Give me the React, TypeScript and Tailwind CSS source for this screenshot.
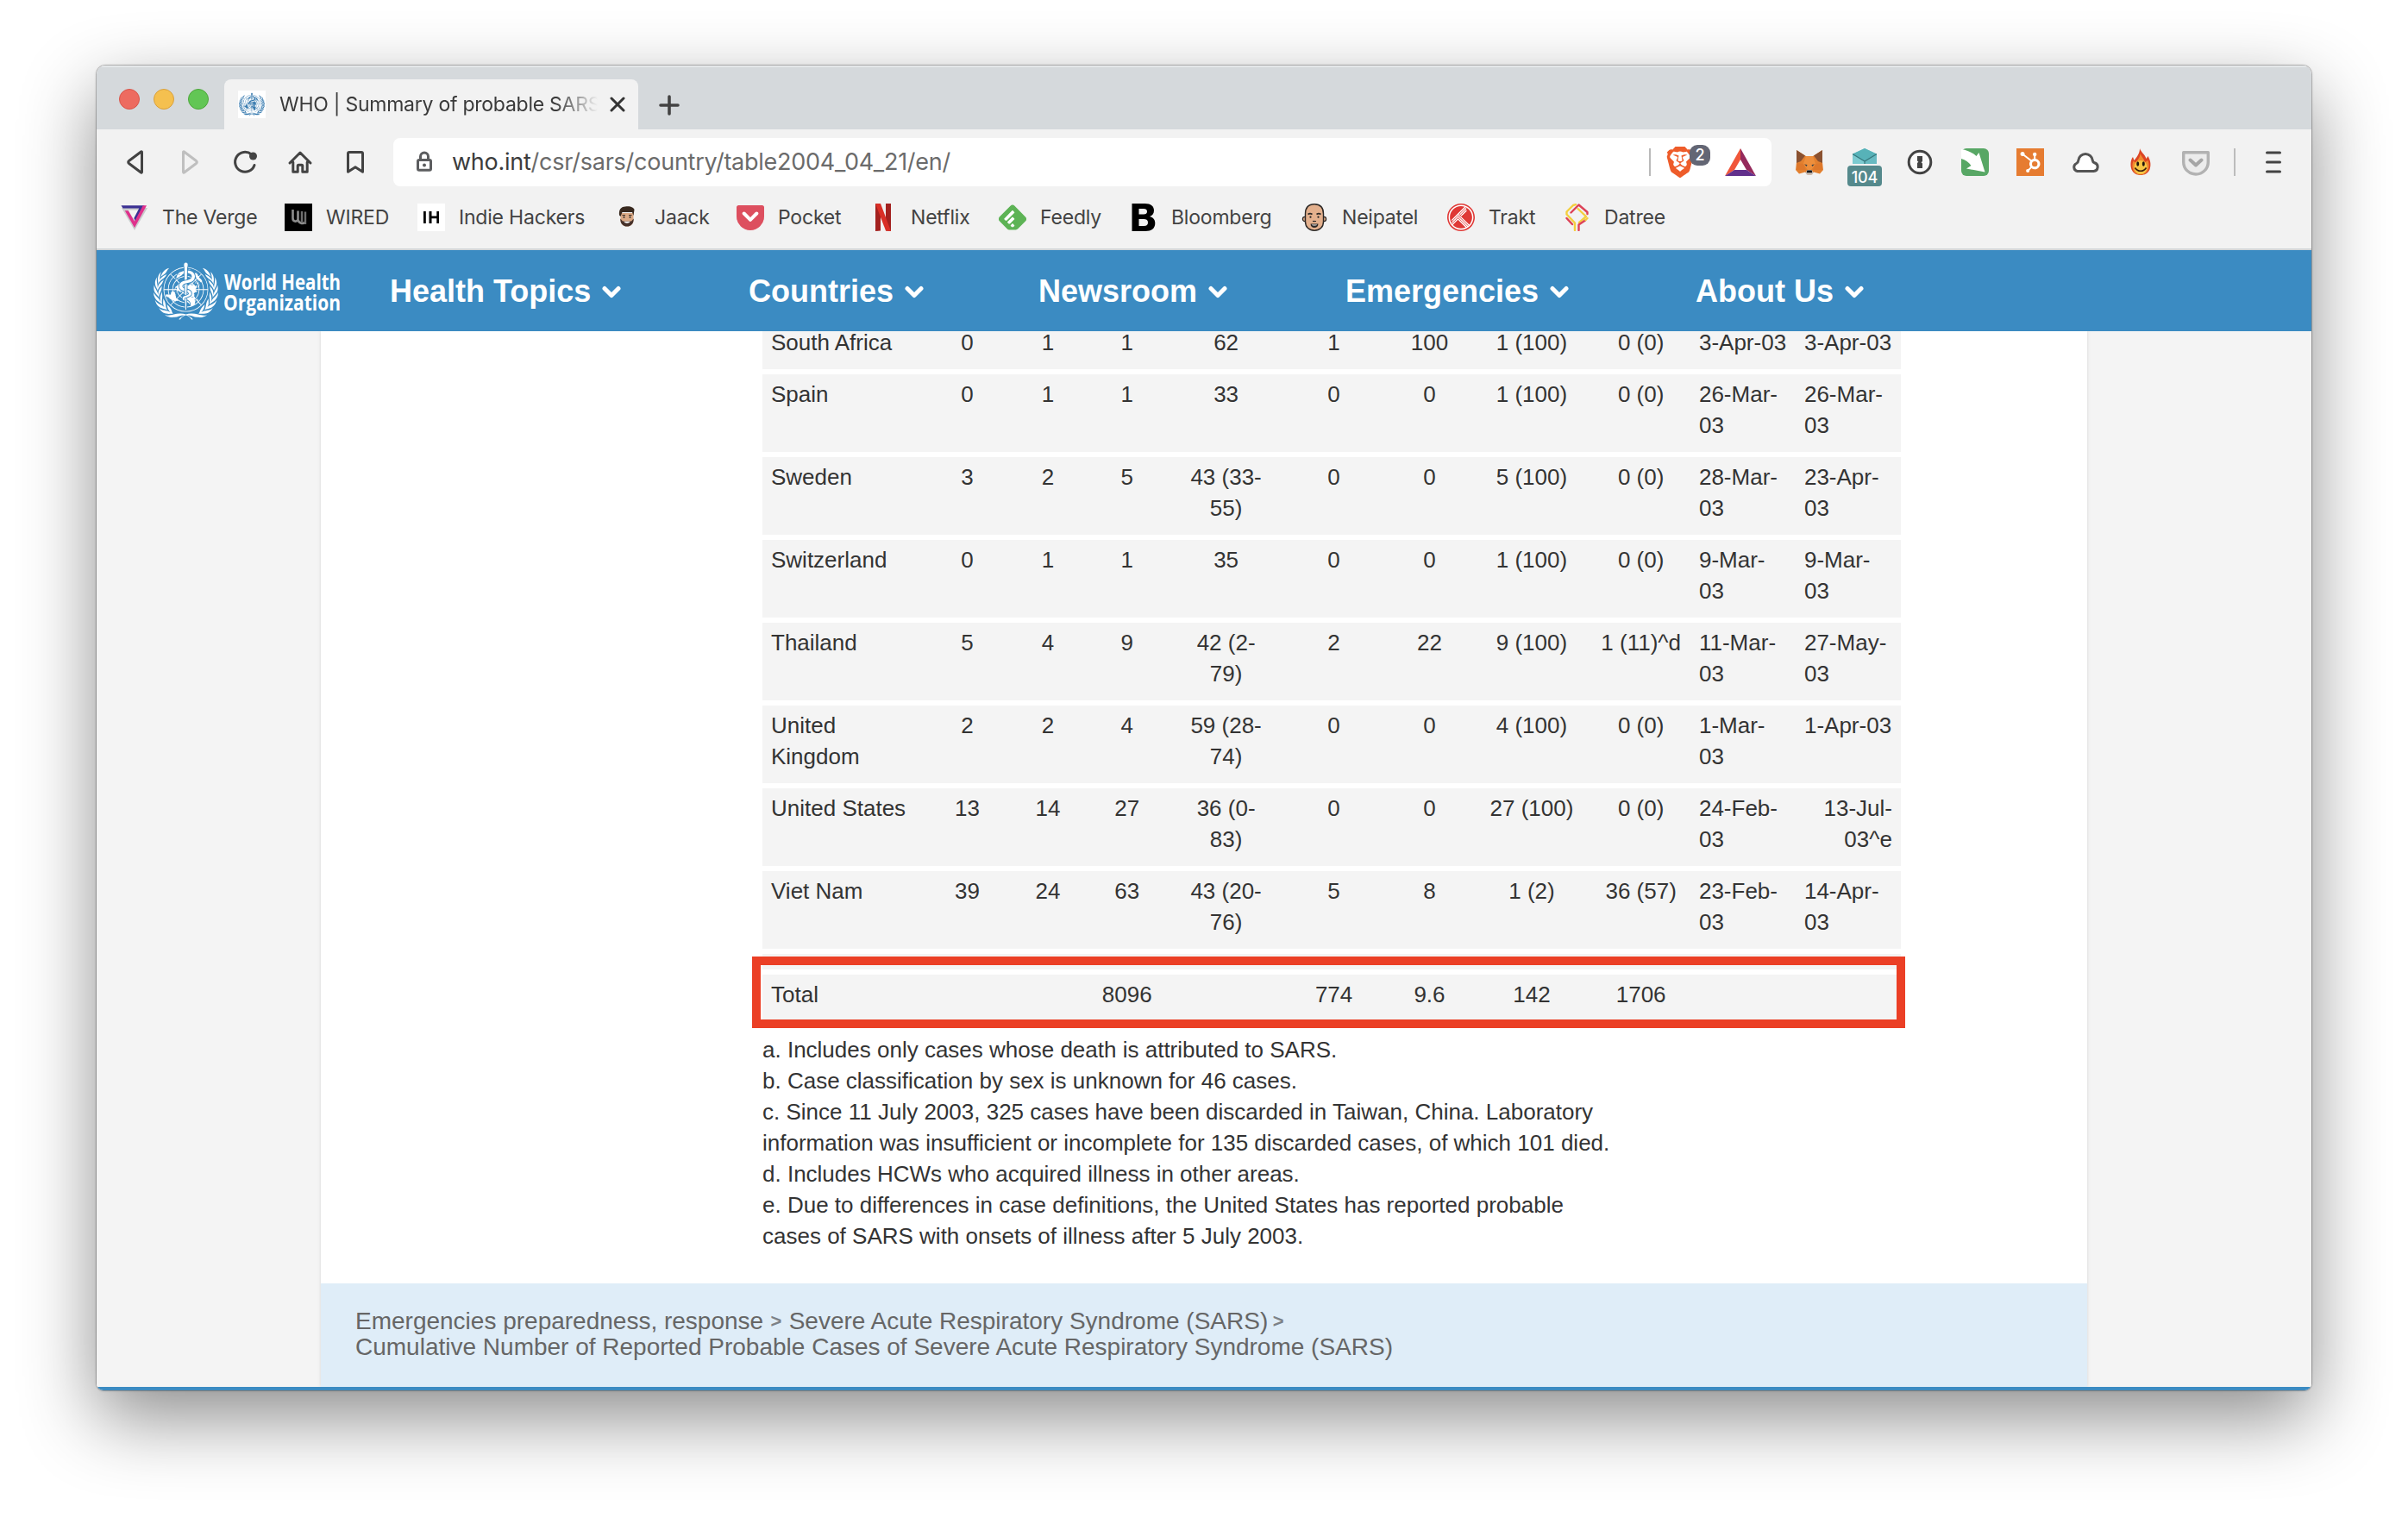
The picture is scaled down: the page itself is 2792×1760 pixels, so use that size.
import type { ReactNode } from "react";
import {
  SiBrave,
  SiFeedly,
  SiHubspot,
  SiTrakt,
  SiWorldhealthorganization,
} from "react-icons/si";

/* ---------- toolbar icons ---------- */

const stroke = {
  fill: "none",
  stroke: "#434343",
  strokeWidth: 3,
  strokeLinecap: "round",
  strokeLinejoin: "round",
} as const;

const BackIcon = () => (
  <svg viewBox="0 0 32 32" className="size-8" {...stroke}>
    <path d="M24.5 4.5v23a.6.6 0 0 1-1 .5L9.500 17.500a1.800 1.800 0 0 1 0-3L23.500 4a.6.6 0 0 1 1 .5z" />
  </svg>
);
const ForwardIcon = () => (
  <svg viewBox="0 0 32 32" className="size-8" {...stroke} stroke="#bfbfbf">
    <path d="M8.500 4.500v23a.6.6 0 0 0 1 .5l14-10.500a1.800 1.800 0 0 0 0-3L9.500 4a.6.6 0 0 0-1 .5z" />
  </svg>
);
const ReloadIcon = () => (
  <svg viewBox="0 0 32 32" className="size-8" {...stroke}>
    <path d="M23.500 7A11.500 11.500 0 1 0 27 19.500" />
    <circle cx="25.500" cy="9" r="4.500" fill="#434343" stroke="none" />
  </svg>
);
const HomeIcon = () => (
  <svg viewBox="0 0 32 32" className="size-8" {...stroke}>
    <path d="M4 17 16 5l12 12M7.800 16v11.300h5.400v-7.100a1 1 0 0 1 1-1h3.600a1 1 0 0 1 1 1v7.100h5.400V16" />
  </svg>
);
const BookmarkIcon = () => (
  <svg viewBox="0 0 32 32" className="size-8" {...stroke}>
    <path d="M7.500 6a1.500 1.500 0 0 1 1.500-1.500h14A1.500 1.500 0 0 1 24.500 6v21.200L16 21.800l-8.500 5.400z" />
  </svg>
);
const LockIcon = () => (
  <svg viewBox="0 0 20 26" className="h-[26px] w-5" fill="none" stroke="#5c5d5f" strokeWidth="3">
    <rect x="2.500" y="10.500" width="15" height="11.800" rx="1.500" />
    <path d="M5.500 10V6.500a4.500 4.500 0 0 1 9 0V10" />
    <circle cx="10" cy="16.400" r="2" fill="#5c5d5f" stroke="none" />
  </svg>
);
const Chevron = () => (
  <svg viewBox="0 0 22 15" className="mt-[1px] ml-[13px] h-[15px] w-[22px]" {...stroke} stroke="#fff" strokeWidth="5">
    <path d="m3 3.500 8 8 8-8" />
  </svg>
);

/* ---------- extension icons ---------- */

const BatIcon = () => (
  <svg viewBox="0 0 36 32" className="h-8 w-9">
    <path d="M18 0 0 32l11-7 7-12z" fill="#f0563a" />
    <path d="M18 0v13l7 12 11 7z" fill="#952a5c" />
    <path d="M0 32h36l-11-7H11z" fill="#62308c" />
  </svg>
);
const FoxIcon = () => (
  <svg viewBox="0 0 32 32" className="size-8">
    <path d="m1 2 11 7h8l11-7v14l1 9-4 4.500-7-2-3 3h-4l-3-3-7 2L0 25l1-9z" fill="#e3802f" />
    <path d="M1 2l10 6.500L6 15l-5 2zM31 2 21 8.500 26 15l5 2z" fill="#8a5130" />
    <path d="m12 9-3 9 5 7h4l5-7-3-9z" fill="#ee8f3c" />
    <path d="m1 17 8 1 3 7-11 0zM31 17l-8 1-3 7 11 0z" fill="#de782b" />
    <path d="m10 18.500 3.500.5-.7 2zM22 18.500l-3.500.5.700 2z" fill="#3a4146" />
    <path d="m11.500 28 2-3h5l2 3-1.500 2.800h-6z" fill="#c8bdb4" />
    <path d="M13.300 25.500h5.400l.5 2.800h-6.400z" fill="#17181a" />
  </svg>
);
const MailIcon = () => (
  <span className="relative flex h-8 w-8 justify-center">
    <svg viewBox="0 0 28 18" className="h-[18px] w-7">
      <path d="M0 6.500 14 0l14 6.500V18H0z" fill="#7ccad0" />
      <path d="M0 6.500 14 0l14 6.500L14 15z" fill="#57b2b8" />
      <path d="M28 6.500V18H14v-3z" fill="#68bac1" />
      <path d="m0 6.500 14 8.500 14-8.500M14 15v3" fill="none" stroke="#35777d" strokeWidth="1.200" />
    </svg>
    <span className="absolute top-5 left-[-4px] flex h-6 w-10 items-center justify-center rounded-[4px] bg-[#55898c] pt-[3px] text-[18px] leading-none font-medium tracking-[-0.2px] text-white">
      104
    </span>
  </span>
);
const OnePasswordIcon = () => (
  <svg viewBox="0 0 32 32" className="size-8">
    <circle cx="16" cy="16" r="12.800" fill="#fafafa" stroke="#434343" strokeWidth="3" />
    <path d="M13 9h6v6l-1.400 1.300L19 17.600V23h-6v-6l1.400-1.300L13 14.400z" fill="#434343" />
  </svg>
);
const ArrowIcon = () => (
  <svg viewBox="0 0 32 32" className="size-8">
    <rect width="32" height="32" rx="6" fill="#58a765" />
    <path d="M0 1c7 1 13 4 17.500 8L20.500 5l7 22.500L6 23.500l5.500-3.500C8.500 16 5 13.500 0 12z" fill="#fff" />
  </svg>
);
const HubspotIcon = () => (
  <span className="flex size-8 items-center justify-center bg-[#e67c31] text-white">
    <SiHubspot className="size-6" />
  </span>
);
const CloudIcon = () => (
  <svg viewBox="0 0 32 32" className="size-8" {...stroke} fill="#fff" stroke="#545454">
    <path d="M6.500 26.500h19a5 5 0 0 0 1-9.800c-1.500-.4-2-1-2.200-2.700a8.300 8.300 0 0 0-16.500 0c-.1 1.800-.6 2.600-2.300 3.500a4.800 4.800 0 0 0 1 9z" />
  </svg>
);
const FlameIcon = () => (
  <svg viewBox="0 0 32 32" className="size-8">
    <path d="M15 0c1 4 6 7 7.500 12l2-3c3.500 6 3.500 11 2 15.500C24.500 29 20.500 31 16 31S7.500 29 5.500 24.500C4 20 4 14 7 10l1.500 4c3-4 6.500-8 6.500-14z" fill="#dc4524" />
    <path d="M15.500 6c1 3 4.500 6 5.500 10l3.500-2c1.500 4 1.500 7.500.2 10.500C23 28.500 20 30.500 16 30.500s-7.500-2-8.700-5.500c-1.200-3-1.300-7 .2-10.500l2.500 2c2.500-3 5.500-6 5.500-10.500z" fill="#f08a30" />
    <ellipse cx="16" cy="22" rx="7.500" ry="8" fill="#f6c544" />
    <ellipse cx="12.700" cy="18" rx="1.500" ry="2.700" fill="#20140d" />
    <ellipse cx="19.300" cy="18" rx="1.500" ry="2.700" fill="#20140d" />
    <path d="M9.500 22.500c3 5 10 5 13 0" fill="none" stroke="#3a1c0c" strokeWidth="1.600" />
  </svg>
);
const GreyPocketIcon = () => (
  <svg viewBox="0 0 32 32" className="size-8">
    <path d="M1.700 4.700h28.600V16a14.300 14 0 0 1-28.600 0z" fill="#ececec" stroke="#b2b2b2" strokeWidth="3.400" strokeLinejoin="round" />
    <path d="m9.500 13.500 6.500 6 6.500-6" fill="none" stroke="#a6a6a6" strokeWidth="4" strokeLinecap="round" strokeLinejoin="round" />
  </svg>
);

/* ---------- bookmark icons ---------- */

const VergeIcon = () => (
  <svg viewBox="0 0 32 32" className="size-8">
    <path d="M1 5h30L16 31z" fill="#c9c9cb" />
    <path d="M8.500 7.500h14L16 20z" fill="#f2f2f2" />
    <path d="M.5 2.200h27L17 20.500l-1.700-3.600 6-11.400H2.500z" fill="#3b3193" />
    <path d="M25.800 2.200H30L16 28 4.800 8.200h4L16 20.800z" fill="#e0318c" />
  </svg>
);
const WiredIcon = () => (
  <svg viewBox="0 0 32 32" className="size-8">
    <rect width="32" height="32" fill="#000" />
    <path d="M9.500 7v10c0 4 4.500 5 6 1.500V8.500m0 10c.5 4 5 5.500 8.500 3.500" fill="none" stroke="#8d8d8d" strokeWidth="2.600" />
    <path d="M20 9v12.500M24 9.500V24" fill="none" stroke="#6f6f6f" strokeWidth="2.400" />
  </svg>
);
const IndieIcon = () => (
  <svg viewBox="0 0 32 32" className="size-8">
    <rect width="32" height="32" fill="#fff" />
    <path d="M7 9h2.800v14H7zM13.500 9h3v5.500h5.800V9H25v14h-2.700v-5.800h-5.800V23h-3z" fill="#000" />
  </svg>
);
const JaackIcon = () => (
  <svg viewBox="0 0 32 32" className="size-8">
    <path d="M8.500 11h15v8c0 5-3.500 7.500-7.500 7.500S8.500 24 8.500 19z" fill="#dba985" />
    <path d="M7 13.500C6.500 7 8.500 4 14 3.500c6-1 10 1.500 10.500 3.500l-1 7-1.500-4H10.500L8.500 15z" fill="#38291f" />
    <path d="M8.300 17.500 11 20.500h10l2.700-3c.3 5.500-3.200 9-7.700 9s-8-3.500-7.700-9z" fill="#46312a" />
    <path d="M12.500 20.800h7c-.5 2.600-6.500 2.600-7 0z" fill="#fff" />
    <path d="M10.500 13.500h3.500m4 0h3.500" stroke="#38291f" strokeWidth="1.200" />
    <circle cx="12.500" cy="15.700" r="1" fill="#222" />
    <circle cx="19.500" cy="15.700" r="1" fill="#222" />
  </svg>
);
const PocketIcon = () => (
  <svg viewBox="0 0 32 32" className="size-8">
    <path d="M2.500 2h27A2.500 2.500 0 0 1 32 4.500V15a16 16 0 0 1-32 0V4.500A2.500 2.500 0 0 1 2.500 2z" fill="#dd4f5f" />
    <path d="m8.700 11.500 7.300 7.300 7.300-7.300" fill="none" stroke="#fff" strokeWidth="4" strokeLinecap="round" strokeLinejoin="round" />
  </svg>
);
const NetflixIcon = () => (
  <svg viewBox="0 0 32 32" className="size-8">
    <path d="M7 0h6v31.500L7 32zM19 0h6v32l-6-.5z" fill="#a3211f" />
    <path d="M7 0h6l12 32-6-.5z" fill="#d92f27" />
  </svg>
);
const FeedlyIcon = () => <SiFeedly className="size-8 bg-[radial-gradient(circle,#fff_9px,transparent_10px)] text-[#5db355]" />;
const BloombergIcon = () => (
  <svg viewBox="0 0 32 32" className="size-8">
    <path
      fillRule="evenodd"
      d="M2.500 0h15C24.500 0 28 3 28 8c0 3.500-1.800 6-5 7 4 1 6.300 3.500 6.300 7.800C29.300 29 25 32 18 32H2.500zM10.500 6v6.500H16c2.500 0 4-1 4-3.300S18.500 6 16 6zm0 12v8h6c3 0 4.500-1.400 4.500-4s-1.500-4-4.500-4z"
      fill="#000"
    />
  </svg>
);
const NeilIcon = () => (
  <svg viewBox="0 0 32 32" className="size-8">
    <circle cx="5" cy="18" r="2.600" fill="#e0ad8b" stroke="#2b2725" strokeWidth="1.200" />
    <circle cx="27" cy="18" r="2.600" fill="#e0ad8b" stroke="#2b2725" strokeWidth="1.200" />
    <path d="M5.500 12C5.500 5 9 .8 16 .8S26.500 5 26.500 12v9c0 6.500-4.500 10.200-10.500 10.200S5.500 27.500 5.500 21z" fill="#e3b08d" stroke="#2b2725" strokeWidth="1.400" />
    <path d="M8.500 12.500c1.500-1 3.500-1 5 0m5 0c1.500-1 3.500-1 5 0" fill="none" stroke="#2b2725" strokeWidth="1.600" />
    <circle cx="11.500" cy="15.700" r="1.100" fill="#222" />
    <circle cx="20.500" cy="15.700" r="1.100" fill="#222" />
    <path d="M14 20.500h4" stroke="#2b2725" strokeWidth="1.200" />
    <path d="M11.500 23.500h9c0 6-9 6-9 0z" fill="#2b2725" />
    <path d="M12.800 24.500h6.400c-.5 1.300-5.900 1.300-6.400 0z" fill="#fff" />
  </svg>
);
const TraktIcon = () => (
  <span className="flex size-8 rounded-full bg-white text-[#df3936]">
    <SiTrakt className="size-8" />
  </span>
);
const DatreeIcon = () => (
  <svg viewBox="0 0 32 32" className="size-8" fill="none" strokeWidth="2.400" strokeLinecap="round" strokeLinejoin="round">
    <path d="M14 31v-8.500L4.500 12.500v-3L12 2l3-.800" stroke="#f4cf3f" />
    <path d="M17.500 6 27 15l-8 7" stroke="#f4cf3f" />
    <path d="M9.500 10.500 18.500 1.500 28.500 10v2" stroke="#dd4257" />
    <path d="m4.500 17 6.500 7M18.500 31v-6.500l7.500-5" stroke="#dd4257" />
    <path d="m28.500 17-2 2" stroke="#f4cf3f" />
  </svg>
);

/* ---------- data ---------- */

const bookmarks: { label: string; icon: ReactNode; width: string }[] = [
  { label: "The Verge", icon: <VergeIcon />, width: "w-[190px]" },
  { label: "WIRED", icon: <WiredIcon />, width: "w-[154px]" },
  { label: "Indie Hackers", icon: <IndieIcon />, width: "w-[227px]" },
  { label: "Jaack", icon: <JaackIcon />, width: "w-[143px]" },
  { label: "Pocket", icon: <PocketIcon />, width: "w-[154px]" },
  { label: "Netflix", icon: <NetflixIcon />, width: "w-[150px]" },
  { label: "Feedly", icon: <FeedlyIcon />, width: "w-[152px]" },
  { label: "Bloomberg", icon: <BloombergIcon />, width: "w-[198px]" },
  { label: "Neipatel", icon: <NeilIcon />, width: "w-[170px]" },
  { label: "Trakt", icon: <TraktIcon />, width: "w-[134px]" },
  { label: "Datree", icon: <DatreeIcon />, width: "w-[134px]" },
];

const navItems = [
  { label: "Health Topics", width: "w-[416px]" },
  { label: "Countries", width: "w-[336px]" },
  { label: "Newsroom", width: "w-[356px]" },
  { label: "Emergencies", width: "w-[406px]" },
  { label: "About Us", width: "w-[240px]" },
];

const rows: string[][] = [
  ["South Africa", "0", "1", "1", "62", "1", "100", "1 (100)", "0 (0)", "3-Apr-03", "3-Apr-03"],
  ["Spain", "0", "1", "1", "33", "0", "0", "1 (100)", "0 (0)", "26-Mar-\n03", "26-Mar-\n03"],
  ["Sweden", "3", "2", "5", "43 (33-\n55)", "0", "0", "5 (100)", "0 (0)", "28-Mar-\n03", "23-Apr-\n03"],
  ["Switzerland", "0", "1", "1", "35", "0", "0", "1 (100)", "0 (0)", "9-Mar-\n03", "9-Mar-\n03"],
  ["Thailand", "5", "4", "9", "42 (2-\n79)", "2", "22", "9 (100)", "1 (11)^d", "11-Mar-\n03", "27-May-\n03"],
  ["United\nKingdom", "2", "2", "4", "59 (28-\n74)", "0", "0", "4 (100)", "0 (0)", "1-Mar-\n03", "1-Apr-03"],
  ["United States", "13", "14", "27", "36 (0-\n83)", "0", "0", "27 (100)", "0 (0)", "24-Feb-\n03", "13-Jul-\n03^e"],
  ["Viet Nam", "39", "24", "63", "43 (20-\n76)", "5", "8", "1 (2)", "36 (57)", "23-Feb-\n03", "14-Apr-\n03"],
];
const total = ["Total", "", "", "8096", "", "774", "9.6", "142", "1706", "", ""];

const footnotes = [
  "a. Includes only cases whose death is attributed to SARS.",
  "b. Case classification by sex is unknown for 46 cases.",
  "c. Since 11 July 2003, 325 cases have been discarded in Taiwan, China. Laboratory",
  "information was insufficient or incomplete for 135 discarded cases, of which 101 died.",
  "d. Includes HCWs who acquired illness in other areas.",
  "e. Due to differences in case definitions, the United States has reported probable",
  "cases of SARS with onsets of illness after 5 July 2003.",
];

function cellAlign(col: number, text: string) {
  if (text.includes("^e")) return "pr-2.5 text-right";
  if (col === 0 || col > 8) return "pl-2.5 text-left";
  return "text-center";
}

function Row({ cells }: { cells: string[] }) {
  return (
    <div className="grid grid-cols-[184px_107px_80px_103.4px_126.4px_123.6px_98.2px_138.8px_114.6px_122px_122px] bg-[#f4f4f4] pt-[5px] pb-[13px]">
      {cells.map((text, col) => (
        <div key={col} className={"whitespace-pre " + cellAlign(col, text)}>
          {text}
        </div>
      ))}
    </div>
  );
}

/* ---------- sections ---------- */

function TabStrip() {
  return (
    <div className="flex h-[74px] bg-[#d5d9dc] shadow-[inset_0_2px_0_#e4e7e9]">
      <div className="mt-[27px] ml-[26px] flex gap-4">
        <span className="size-6 rounded-full border border-[#d9564b] bg-[#ed6b60]" />
        <span className="size-6 rounded-full border border-[#d9a03c] bg-[#f5c04f]" />
        <span className="size-6 rounded-full border border-[#4ea73c] bg-[#62c655]" />
      </div>
      <div className="mt-4 ml-[18px] flex w-[480px] items-center rounded-t-[8px] bg-[#f2f2f2] pl-4">
        <span className="flex size-8 shrink-0 items-center justify-center bg-white text-[#3a7cb0]">
          <SiWorldhealthorganization className="size-[30px]" />
        </span>
        <span className="mt-px ml-4 w-[369px] overflow-hidden [mask-image:linear-gradient(to_right,#000_320px,transparent_369px)] text-[23px] tracking-[-0.25px] whitespace-nowrap text-[#3a3a3a]">
          WHO | Summary of probable SARS
        </span>
        <svg viewBox="0 0 18 18" className="ml-[14px] size-[18px]" {...stroke} stroke="#333">
          <path d="m2 2 14 14M16 2 2 16" />
        </svg>
      </div>
      <svg viewBox="0 0 24 24" className="mt-[34px] ml-6 size-6" {...stroke} strokeWidth="3.600">
        <path d="M12 2v20M2 12h20" />
      </svg>
    </div>
  );
}

function Toolbar() {
  return (
    <div className="mt-[10px] flex h-14 items-center pl-7">
      <div className="flex gap-8">
        <BackIcon />
        <ForwardIcon />
        <ReloadIcon />
        <HomeIcon />
        <BookmarkIcon />
      </div>
      <div className="ml-7 flex h-14 w-[1598px] items-center rounded-[8px] bg-white pl-[26px]">
        <LockIcon />
        <div className="ml-[22px] text-[27px] tracking-[-0.25px] text-[#6b6b6b]">
          <span className="text-[#3c3c3c]">who.int</span>/csr/sars/country/table2004_04_21/en/
        </div>
        <div className="mr-[18px] ml-auto flex items-center">
          <span className="h-8 w-[2px] bg-[#b9b9b9]" />
          <span className="relative ml-[16px] flex h-9 w-[36px] items-center justify-center">
            <svg viewBox="0 0 36 36" className="absolute inset-0 size-9">
              <path d="M9 6h17l3 12-5 10-7 5-7-5-5-10z" fill="#fff" />
            </svg>
            <SiBrave className="relative size-9 text-[#ee5c2a]" />
            <span className="absolute -top-[2px] left-[29px] flex h-6 w-6 items-center justify-center rounded-[9px] bg-[#636674] text-[18px] leading-none font-medium text-white">
              2
            </span>
          </span>
          <span className="ml-[34px]">
            <BatIcon />
          </span>
        </div>
      </div>
      <div className="ml-7 flex gap-8">
        <FoxIcon />
        <MailIcon />
        <OnePasswordIcon />
        <ArrowIcon />
        <HubspotIcon />
        <CloudIcon />
        <FlameIcon />
        <GreyPocketIcon />
      </div>
      <span className="ml-7 h-8 w-[2px] bg-[#bcbcbc]" />
      <svg viewBox="0 0 20 26" className="ml-[34px] h-[26px] w-5" {...stroke}>
        <path d="M2.500 2h15M2.500 13h15M2.500 24h15" />
      </svg>
    </div>
  );
}

function Bookmarks() {
  return (
    <div className="mt-5 flex h-8 pl-7">
      {bookmarks.map((b) => (
        <div key={b.label} className={"flex shrink-0 items-center gap-4 " + b.width}>
          <span className="shrink-0">{b.icon}</span>
          <span className="text-[23px] leading-8 tracking-[-0.2px] whitespace-nowrap text-[#434343]">
            {b.label}
          </span>
        </div>
      ))}
    </div>
  );
}

function SiteHeader() {
  return (
    <header className="relative z-10 flex h-[94px] shrink-0 items-center bg-[#3b8bc2] pl-[66px] text-white">
      <SiWorldhealthorganization className="size-[75px] shrink-0" />
      <svg viewBox="0 0 136 70" className="ml-[7px] h-[70px] w-[136px] overflow-visible" fill="#fff" fontFamily="'Open Sans', sans-serif" fontWeight="700" fontSize="24.500">
        <text x="0" y="33.500" textLength="135" lengthAdjust="spacingAndGlyphs">
          World Health
        </text>
        <text x="-1" y="57.500" textLength="136" lengthAdjust="spacingAndGlyphs">
          Organization
        </text>
      </svg>
      <nav className="mt-[2px] ml-[56px] flex font-['Liberation_Sans',sans-serif] text-[36px] font-bold">
        {navItems.map((n) => (
          <div key={n.label} className={"flex shrink-0 items-center whitespace-nowrap " + n.width}>
            {n.label}
            <Chevron />
          </div>
        ))}
      </nav>
    </header>
  );
}

function Page() {
  return (
    <div className="flex h-[1224px] justify-center overflow-hidden bg-[#f4f4f4] font-['Liberation_Sans',sans-serif] text-[26px] leading-9 text-[#333]">
      <div className="flex w-[2048px] flex-col bg-white shadow-[0_0_4px_rgba(0,0,0,0.12)]">
        <div className="-mt-[10px] ml-[512px] w-[1320px]">
          <div className="flex flex-col gap-1.5">
            {rows.map((r) => (
              <Row key={r[0]} cells={r} />
            ))}
            <div className="h-[18px] bg-[#f4f4f4]" />
            <div className="relative">
              <Row cells={total} />
              <div className="absolute -top-[21px] -left-[12px] h-[83px] w-[1337px] border-10 border-[#eb3f25]" />
            </div>
          </div>
          <div className="mt-[15px]">
            {footnotes.map((f) => (
              <div key={f} className="whitespace-nowrap">
                {f}
              </div>
            ))}
          </div>
        </div>
        <div className="mt-auto h-[120px] shrink-0 bg-[#dfedf8] pt-[29px] pl-10 text-[28px] leading-[30px] text-[#666]">
          <div className="flex whitespace-nowrap">
            Emergencies preparedness, response
            <span className="w-[29.5px] text-center text-[22px] font-bold text-[#7d8287]">&gt;</span>
            Severe Acute Respiratory Syndrome (SARS)
            <span className="w-[24px] text-center text-[22px] font-bold text-[#7d8287]">&gt;</span>
          </div>
          <div className="whitespace-nowrap">
            Cumulative Number of Reported Probable Cases of Severe Acute Respiratory Syndrome (SARS)
          </div>
        </div>
      </div>
    </div>
  );
}

export default function App() {
  return (
    <div className="flex h-[1760px] w-[2792px] items-start overflow-hidden bg-white pt-[76px] pl-[112px]">
      <div className="rounded-t-[10px] rounded-b-[8px] shadow-[0_0_0_1px_rgba(0,0,0,0.18),0_0_3px_rgba(0,0,0,0.25),0_32px_86px_rgba(0,0,0,0.45)]">
        <div className="flex h-[1536px] w-[2568px] flex-col overflow-hidden rounded-t-[10px] rounded-b-[8px] bg-[#f2f2f2] font-['Inter',sans-serif]">
          <TabStrip />
          <Toolbar />
          <Bookmarks />
          <div className="mt-5 h-[2px] shrink-0 bg-[#d2d6d9]" />
          <SiteHeader />
          <Page />
          <div className="h-1 shrink-0 bg-[#3b8bc2]" />
        </div>
      </div>
    </div>
  );
}
